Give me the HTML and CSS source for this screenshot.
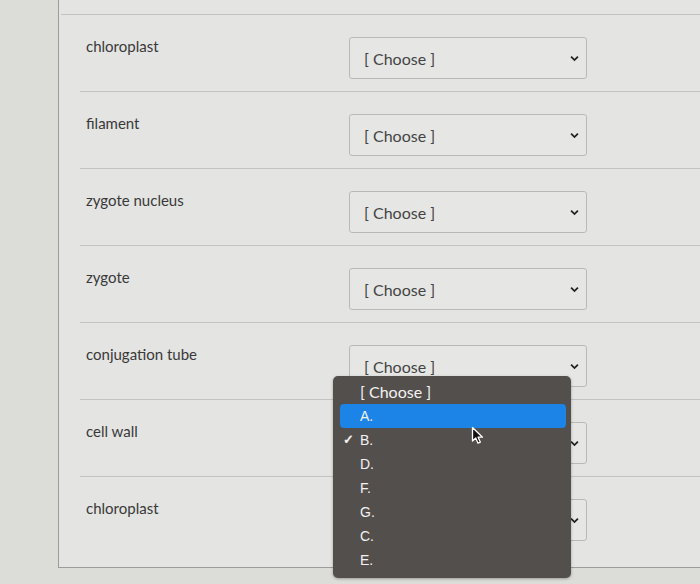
FILE: index.html
```html
<!DOCTYPE html>
<html lang="en">
<head>
    <meta charset="UTF-8">
    <title>Matching question</title>
    <link rel="stylesheet" href="styles.css">
</head>
<body>
    <div class="panel">
        <div class="top-rule"></div>
        <div class="answers">
            <div class="answer-row">
                <div class="term">chloroplast</div>
                <div class="select-box"><span>[ Choose ]</span><svg class="chev" viewBox="0 0 10 7" width="9" height="7"><path d="M1.2 1.4 L5 5.2 L8.8 1.4" fill="none" stroke="#222" stroke-width="2"/></svg></div>
            </div>
            <div class="answer-row">
                <div class="term">filament</div>
                <div class="select-box"><span>[ Choose ]</span><svg class="chev" viewBox="0 0 10 7" width="9" height="7"><path d="M1.2 1.4 L5 5.2 L8.8 1.4" fill="none" stroke="#222" stroke-width="2"/></svg></div>
            </div>
            <div class="answer-row">
                <div class="term">zygote nucleus</div>
                <div class="select-box"><span>[ Choose ]</span><svg class="chev" viewBox="0 0 10 7" width="9" height="7"><path d="M1.2 1.4 L5 5.2 L8.8 1.4" fill="none" stroke="#222" stroke-width="2"/></svg></div>
            </div>
            <div class="answer-row">
                <div class="term">zygote</div>
                <div class="select-box"><span>[ Choose ]</span><svg class="chev" viewBox="0 0 10 7" width="9" height="7"><path d="M1.2 1.4 L5 5.2 L8.8 1.4" fill="none" stroke="#222" stroke-width="2"/></svg></div>
            </div>
            <div class="answer-row">
                <div class="term">conjugation tube</div>
                <div class="select-box"><span>[ Choose ]</span><svg class="chev" viewBox="0 0 10 7" width="9" height="7"><path d="M1.2 1.4 L5 5.2 L8.8 1.4" fill="none" stroke="#222" stroke-width="2"/></svg></div>
            </div>
            <div class="answer-row">
                <div class="term">cell wall</div>
                <div class="select-box"><span class="covered">[ Choose ]</span><svg class="chev" viewBox="0 0 10 7" width="9" height="7"><path d="M1.2 1.4 L5 5.2 L8.8 1.4" fill="none" stroke="#222" stroke-width="2"/></svg></div>
            </div>
            <div class="answer-row last">
                <div class="term">chloroplast</div>
                <div class="select-box"><span class="covered">[ Choose ]</span><svg class="chev" viewBox="0 0 10 7" width="9" height="7"><path d="M1.2 1.4 L5 5.2 L8.8 1.4" fill="none" stroke="#222" stroke-width="2"/></svg></div>
            </div>
        </div>
    </div>

    <!-- open dropdown of the "conjugation tube" select -->
    <ul class="menu">
        <li class="first"><span class="tick"></span>[ Choose ]</li>
        <li class="hover"><span class="tick"></span>A.</li>
        <li><span class="tick">✓</span>B.</li>
        <li><span class="tick"></span>D.</li>
        <li><span class="tick"></span>F.</li>
        <li><span class="tick"></span>G.</li>
        <li><span class="tick"></span>C.</li>
        <li><span class="tick"></span>E.</li>
    </ul>

    <svg class="cursor" viewBox="0 0 13 19" width="13" height="19">
        <path d="M1.5 1.5 L1.5 15 L4.7 12 L7 17.2 L9.4 16.2 L7.1 11.2 L11.5 11.2 Z" fill="#111" stroke="#fff" stroke-width="1.3" stroke-linejoin="round"/>
    </svg>
</body>
</html>
```

FILE: styles.css
```css
/* matching question, dropdown open */
body { margin: 0; height: 584px; overflow: hidden; background-color: #dcdcd9; font-family: 'Lato', 'Liberation Sans', sans-serif; position: relative; }
.panel { margin-left: 58px; height: 568px; box-sizing: border-box; border-left: 1px solid #9c9c9a; border-bottom: 1px solid #9c9c9a; background-color: #e4e4e2; padding-top: 14px; }
.top-rule { margin-left: 2px; border-top: 1px solid #c3c3c1; }
.answers { margin-left: 21px; }
.answer-row { display: flex; align-items: flex-start; border-top: 1px solid #c3c3c1; height: 77px; box-sizing: border-box; padding: 22px 0 0 6px; }
.answer-row:first-child { border-top: none; height: 76px; padding-top: 22px; }
.answer-row.last { height: 90px; }
.term { width: 263px; font-size: 15px; line-height: 19px; color: #393939; }
.select-box { width: 238px; height: 42px; box-sizing: border-box; border: 1px solid #b9b9b7; border-radius: 3px; background-color: #e6e6e4; display: flex; align-items: center; justify-content: space-between; padding: 0 7px 0 14px; font-size: 16px; color: #444; }
.select-box .covered { visibility: hidden; }
.chev { display: block; margin-top: 1px; }
.menu { position: absolute; left: 333px; top: 376px; width: 238px; margin: 0; padding: 4px 0 6px; list-style: none; background-color: #524f4d; border-radius: 5px; box-shadow: 0 1px 3px rgba(0,0,0,0.3); font-family: 'Liberation Sans', 'Helvetica', sans-serif; font-size: 14px; color: #f2f2f2; }
.menu li { display: flex; height: 24px; line-height: 24px; margin: 0 5px 0 7px; padding-left: 3px; }
.menu li.first { font-family: 'Lato', 'Liberation Sans', sans-serif; font-size: 16px; }
.menu li.hover { background-color: #1c84e6; border-radius: 4px; }
.tick { width: 17px; flex: none; font-size: 13px; font-weight: bold; }
.cursor { position: absolute; left: 471px; top: 426px; }
```
